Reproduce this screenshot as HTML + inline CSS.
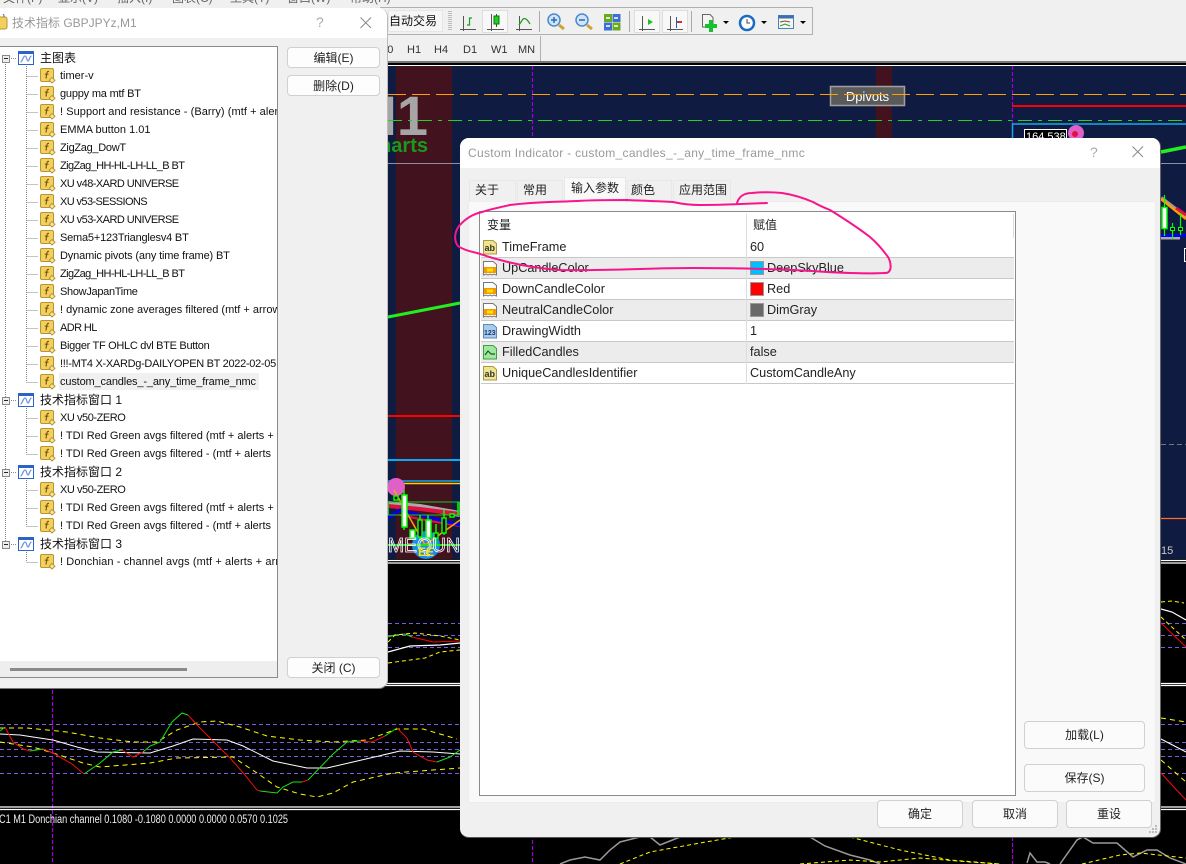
<!DOCTYPE html>
<html><head><meta charset="utf-8"><style>
*{box-sizing:border-box}
html,body{margin:0;padding:0;width:1186px;height:864px;overflow:hidden;background:#000;font-family:"Liberation Sans","Noto Sans CJK SC",sans-serif;font-size:12px;color:#111}
.a{position:absolute}
#bg{position:absolute;left:0;top:0}
.t{position:absolute;white-space:nowrap;line-height:16px}
.dlg{position:absolute;background:#f0f0f0;overflow:hidden}
.btn{position:absolute;background:#fdfdfd;border:1px solid #d0d0d0;border-radius:4px;text-align:center;font-size:12px;color:#222}
.r{position:absolute;left:60px;height:16px;line-height:16px;white-space:nowrap;font-size:11px;color:#111}
.r svg{position:absolute;left:-20px;top:0;width:16px;height:16px}
.h{position:absolute;left:40px;height:16px;line-height:16px;white-space:nowrap;font-size:12px;color:#111}
.h svg{position:absolute;left:-22px;top:0;width:16px;height:16px}
.h i{position:absolute;left:-38px;top:5px;width:8px;height:8px;border:1px solid #888;background:#eee}
.h i:after{content:"";position:absolute;left:1px;top:2px;width:4px;height:1px;background:#223}
.c{position:absolute;height:16px;line-height:16px;white-space:nowrap;font-size:12.700px;color:#222}
.c svg{position:absolute;left:-20px;top:0;width:16px;height:16px}
.tab{position:absolute;background:#f0f0f0;border:1px solid #e8e8e8;border-bottom:0;font-size:12px;text-align:left;line-height:19px;color:#222}
.tb{position:absolute;font-size:11px;color:#333;line-height:14px}
</style></head><body>
<svg width="0" height="0" style="position:absolute">
<defs>
<symbol id="f" viewBox="0 0 16 16"><rect x=".5" y=".5" width="13" height="13" rx="1.500" fill="#f3cf5e" stroke="#b8962e"/><path d="M9 3.500C7.500 3 7 4 6.800 5.500L6 10.500M4.800 6.200h3.700" stroke="#7a5a10" stroke-width="1.200" fill="none"/><path d="M12 9.500l3 2.700-3 2.800-2.700-2.800z" fill="#f8e6a0" stroke="#b8962e"/></symbol>
<symbol id="w" viewBox="0 0 16 16"><rect x=".5" y="1.500" width="15" height="13" fill="#fff" stroke="#2b63c8"/><rect x=".5" y="1.500" width="15" height="2.500" fill="#2b63c8"/><path d="M2.500 12C4.500 12 5 6 7 6S8.500 11 10 11 11.500 6 13.500 6" stroke="#6f94e0" stroke-width="1.300" fill="none"/></symbol>
<symbol id="col" viewBox="0 0 16 16"><path d="M1.500 15V1.500H11L14.500 4.500V15L12 14 10 15 8 14 6 15 4 14z" fill="#fff" stroke="#777"/><rect x="2" y="7" width="12" height="6" fill="#f59a00"/><rect x="5" y="8.500" width="6" height="3" fill="#ffe400"/></symbol>
</defs></svg>

<svg id="bg" width="1186" height="864" viewBox="0 0 1186 864">
<rect width="1186" height="864" fill="#000"/>
<rect y="66" width="1186" height="493" fill="#101b41"/>
<rect x="396" y="66" width="56" height="493" fill="#42121e"/>
<rect x="876" y="66" width="16" height="80" fill="#42121e"/>
<text x="428" y="135" text-anchor="end" font-family="Liberation Sans" font-weight="bold" font-size="56" fill="#a6a6a6">M1</text>
<text x="428" y="152" text-anchor="end" font-family="Liberation Sans" font-weight="bold" font-size="20" fill="#1a9a1a">Charts</text>
<rect x="830.500" y="86.500" width="74" height="19" fill="#5a5a5a" stroke="#a0a0a0" stroke-width="1.500"/>
<text x="867.500" y="101" text-anchor="middle" font-family="Liberation Sans" font-size="13" fill="#fff">Dpivots</text>
<path d="M388 94.500H1186" stroke="#ffa000" stroke-width="1" stroke-dasharray="18 6" fill="none"/>
<path d="M388 120.500H1186" stroke="#22d41c" stroke-width="1" stroke-dasharray="14 6 4 6" fill="none"/>
<path d="M532.500 66V138M1012.500 66V138M52.500 690V864M532.500 690V864M1012.500 837V864" stroke="#a000e0" stroke-width="1.200" stroke-dasharray="4 2" fill="none"/>
<path d="M1012 106H1186" stroke="#f00" stroke-width="2"/>
<path d="M1012.500 138V124H1186" stroke="#10a8f0" stroke-width="1.500" fill="none"/>
<circle cx="1076" cy="133" r="8" fill="#e060c8"/><circle cx="1075" cy="134" r="3" fill="#e01040"/>
<rect x="1024.500" y="129.500" width="42" height="11" fill="#000" stroke="#fff"/>
<text x="1026" y="140" font-family="Liberation Sans" font-size="11" fill="#fff">164.538</text>
<path d="M388 163.500H460M1161 163.500H1186" stroke="#8a8ea8" stroke-width="1"/>
<path d="M388 317L460 303" stroke="#20f020" stroke-width="3"/>
<path d="M1161 152L1186 147" stroke="#20f020" stroke-width="3.500"/>
<path d="M388 416H460" stroke="#f00" stroke-width="2"/>
<path d="M388 460H460" stroke="#10a8f0" stroke-width="2"/>
<path d="M388 481H460" stroke="#10a8f0" stroke-width="1.500"/><path d="M388 483.500H460" stroke="#ffd000" stroke-width="1.500"/>
<path d="M1161 444.500H1186" stroke="#777" stroke-dasharray="5 3"/>
<path d="M1161 518.500H1186" stroke="#ff6a30" stroke-width="1.200"/>
<text x="1161" y="554" font-family="Liberation Sans" font-size="11" fill="#ccc">15</text>
<path d="M1161 198L1186 217" stroke="#999" stroke-width="4"/><path d="M1161 199L1186 219" stroke="#ffa000" stroke-width="2.500"/><path d="M1176 208L1186 215" stroke="#e01040" stroke-width="3"/>
<path d="M1161 238H1180" stroke="#aaa" stroke-width="3"/><path d="M1161 235.500H1186" stroke="#0000f0" stroke-width="3"/>
<g stroke="#0f0" fill="#000"><path d="M1164.500 195V236M1172.500 223V239M1180.500 213V235" fill="none" stroke-width="1.200"/><rect x="1162" y="207.500" width="5" height="21" fill="#fff" stroke-width="1.500"/><rect x="1170.500" y="227.500" width="4" height="3"/><rect x="1178.500" y="227.500" width="4" height="3"/></g>
<rect x="1184.500" y="248.500" width="4" height="13" fill="none" stroke="#fff"/>
<!-- lower left chart cluster -->
<circle cx="396" cy="487" r="9" fill="#e060c8"/>
<circle cx="426" cy="545" r="14" fill="#1c8ce8"/>
<path d="M388 504L420 507L460 514" stroke="#aaa" stroke-width="6" fill="none"/>
<path d="M388 506L420 509L460 514" stroke="#e01040" stroke-width="4" fill="none"/>
<path d="M400 515L430 521L460 526" stroke="#e01040" stroke-width="2" fill="none"/>
<path d="M388 518L400 510L460 525" stroke="#0000f0" stroke-width="3" fill="none"/>
<path d="M394 490L425 545" stroke="#ffa000" stroke-width="1.500"/><path d="M425 545L460 520" stroke="#ffa000" stroke-width="1.500"/>
<rect x="388.500" y="502" width="71" height="13" fill="none" stroke="#20c020"/>
<g stroke="#0f0" stroke-width="1.500"><path d="M404 490V530M420 515V540M428 515V540M436 524V545M444 510V535M458 502V515" fill="none"/>
<rect x="402" y="495" width="5" height="32" fill="#fff"/><rect x="410" y="530" width="5" height="8" fill="#fff"/><rect x="418" y="520" width="4" height="17" fill="#000"/><rect x="426" y="520" width="5" height="18" fill="#fff"/><rect x="434" y="533" width="4" height="5" fill="#000"/><rect x="442" y="518" width="4" height="15" fill="#000"/><rect x="394" y="496" width="4" height="4" fill="#000"/><rect x="450" y="514" width="4" height="3" fill="#000"/></g>
<path d="M388 545H460" stroke="#20e020" stroke-width="2"/>
<text x="388" y="552" font-family="Liberation Sans" font-size="20" fill="none" stroke="#fff" stroke-width=".8" textLength="72" lengthAdjust="spacingAndGlyphs">MEQUN</text>
<text x="418" y="556" font-family="Liberation Sans" font-weight="bold" font-size="12" fill="#ffe000">EE</text>
<path d="M0 560.500H1186M0 563H1186M0 683.500H1186M0 685.500H1186M0 807H1186M0 809.500H1186" stroke="#fff" stroke-width="1.200"/>
<!-- band 1 -->
<path d="M388 623.500H460M1161 623.500H1186M388 635.500H460M1161 635.500H1186M388 647.500H460M1161 647.500H1186" stroke="#7a5ce0" stroke-dasharray="4 3"/>
<path d="M388 652L410 646L440 645L460 643M1161 609L1172 612L1186 620" stroke="#fff" stroke-width="1.200" fill="none"/>
<path d="M388 637L395 635L405 634L412 637" stroke="#20e020" fill="none"/><path d="M412 637L425 640L433 642L460 641M1161 623L1186 647" stroke="#f00" fill="none"/>
<path d="M388 642L395 635L415 633L440 636L460 640M388 663L425 658L440 652L460 650M1161 602L1172 601L1184 603M1161 617L1186 640" stroke="#ff0" stroke-dasharray="4 3" fill="none"/>
<!-- band 2 -->
<g fill="none">
<path d="M0 724.500H460M0 742.500H460M0 749.500H460M0 756.500H460M0 773.500H460M1161 724.500H1186M1161 742.500H1186M1161 749.500H1186M1161 756.500H1186M1161 773.500H1186" stroke="#7a5ce0" stroke-dasharray="4 3"/>
<path d="M0 734L20 735L33 737L53 740L77 747L97 752L150 753L173 746L193 739L227 740L243 746L273 761L307 768L327 768L353 762L400 751L433 752L460 754M1161 739L1186 752" stroke="#fff" stroke-width="1"/>
<path d="M0 728L27 728L67 732L100 738L133 742L157 742L177 730L200 722L217 721L240 727L267 736L300 740L333 742L367 740L397 729L423 729L457 739M1161 718L1186 722" stroke="#ff0" stroke-width="1" stroke-dasharray="5 4"/>
<path d="M0 742L33 747L53 753L83 763L100 767L150 763L177 758L233 757L257 773L277 787L300 794L317 797L333 793L353 782L393 773L460 768M1161 760L1186 782" stroke="#ff0" stroke-width="1" stroke-dasharray="5 4"/>
<path d="M0 731L5 727M30 751L43 749M84 774L100 763L113 752L122 750M143 752L150 746L160 742L172 722L182 713L188 715M260 791L277 793L283 787L293 782L302 782M308 780L333 754L347 742L360 741M385 736L397 728M437 762L450 757L460 750" stroke="#18e018" stroke-width="1"/>
<path d="M5 727L13 742L23 749L30 751M43 749L53 753L72 764L84 774M122 750L133 757L143 752M188 715L200 728L230 758L245 775L257 790L260 791M302 782L308 780M360 741L372 742L385 736M397 728L407 738L413 752L427 760L437 762M1161 773L1172 785L1186 800" stroke="#f01010" stroke-width="1"/>
<!-- bottom band -->
<path d="M560 864L570 860L585 857L600 860L610 850L620 842L640 837M650 837L660 845L680 837M810 837L825 846L850 855L870 860L880 864M1027 863L1030 853L1037 862L1045 862L1050 864M1060 864L1077 840L1083 837L1093 843L1117 843L1133 857L1147 850L1157 850L1170 858L1186 864" stroke="#999" stroke-width="1.500"/>
<path d="M620 864L650 852L700 843L735 837M850 837L900 850L950 860L1000 864M800 864L850 860L880 862L920 858L970 862L1000 864M1082 864L1120 855L1140 853L1186 858" stroke="#ff0" stroke-width="1" stroke-dasharray="4 3"/>
</g>
<text x="-1" y="823" font-family="Liberation Sans" font-size="11.500" fill="#eee" textLength="289" lengthAdjust="spacingAndGlyphs">C1 M1 Donchian channel 0.1080 -0.1080 0.0000 0.0000 0.0570 0.1025</text>
</svg>

<!-- top chrome -->
<div class="a" style="left:0;top:0;width:1186px;height:62px;background:#f0f0f0"></div>
<div class="a" style="left:0;top:61px;width:1186px;height:2px;background:#777"></div>
<div class="a" style="left:0;top:63px;width:1186px;height:2px;background:#000"></div>
<div class="a" style="left:0;top:65px;width:1186px;height:1px;background:#fff"></div>
<div class="a" style="left:0;top:-11px;width:400px;height:16px;font-size:12px;color:#666;white-space:nowrap">
<span class="a" style="left:3px">文件(F)</span><span class="a" style="left:58px">显示(V)</span><span class="a" style="left:117px">插入(I)</span><span class="a" style="left:172px">图表(C)</span><span class="a" style="left:230px">工具(T)</span><span class="a" style="left:287px">窗口(W)</span><span class="a" style="left:350px">帮助(H)</span></div>
<div class="a" style="left:380px;top:7px;width:433px;height:28px;border:1px solid #b0b0b0;border-left:0;background:#f0f0f0"></div>
<div class="a" style="left:540px;top:36px;width:1px;height:25px;background:#b0b0b0"></div>
<div class="a" style="left:388px;top:10px;width:55px;height:22px;background:#f6f6f6;border:1px solid #e6e6e6"></div>
<div class="t" style="left:389px;top:13px;font-size:12px;color:#111">自动交易</div>
<svg class="a" style="left:388px;top:0" width="430" height="36" viewBox="388 0 430 36">
<path d="M448 11.500h4M448 13.500h4M448 15.500h4M448 17.500h4M448 19.500h4M448 21.500h4M448 23.500h4M448 25.500h4M448 27.500h4M448 29.500h4" stroke="#bbb" stroke-width="1"/>
<rect x="482.500" y="10.500" width="25" height="22" fill="#f8f8f8" stroke="#ddd"/>
<rect x="634.500" y="10.500" width="25" height="22" fill="#f8f8f8" stroke="#ddd"/><rect x="662.500" y="10.500" width="25" height="22" fill="#f8f8f8" stroke="#ddd"/>
<path d="M539.500 11V32M629.500 11V32M691.500 11V32" stroke="#aaa"/>
<g fill="none" stroke="#555" stroke-width="1">
<path d="M463.500 16V31M460 29.500H476"/><path d="M491.500 14V31M487 29.500H504"/><path d="M519.500 16V31M516 29.500H532"/><path d="M642.500 16V31M639 29.500H655"/><path d="M670.500 16V31M667 29.500H683"/>
</g>
<path d="M467 25H469.500V18H472" stroke="#18a018" stroke-width="1.200" fill="none"/>
<path d="M496.500 14V27" stroke="#107010"/><rect x="494" y="16" width="5" height="8" fill="#20d020" stroke="#107010"/>
<path d="M519 25L523 19Q526 17 530 24" stroke="#20a020" stroke-width="1.300" fill="none"/>
<path d="M648 19L653 22L648 25Z" fill="#20c020"/>
<path d="M676.500 17V28" stroke="#2060b0"/><path d="M677 22H682" stroke="#d03030" stroke-width="2"/>
<circle cx="554" cy="20" r="6" fill="#cfe6fa" stroke="#4a8ac8" stroke-width="1.500"/><path d="M551 20H557M554 17V23" stroke="#2a6ab0" stroke-width="1.500"/><path d="M559 25L564 29" stroke="#d0a030" stroke-width="3"/>
<circle cx="582" cy="20" r="6" fill="#cfe6fa" stroke="#4a8ac8" stroke-width="1.500"/><path d="M579 20H585" stroke="#2a6ab0" stroke-width="1.500"/><path d="M587 25L592 29" stroke="#d0a030" stroke-width="3"/>
<rect x="604" y="14" width="8" height="8" fill="#6aaa20"/><rect x="612.500" y="14" width="8" height="8" fill="#3a70d0"/><rect x="604" y="22.500" width="8" height="8" fill="#3a70d0"/><rect x="612.500" y="22.500" width="8" height="8" fill="#6aaa20"/>
<path d="M606 18h4M614 18h4M606 26h4M614 26h4" stroke="#fff" stroke-width="1.500"/>
<path d="M702.500 27V14.500H710L713 17.500V27Z" fill="#f4f4f4" stroke="#666"/><path d="M705 26H717M711 20V32" stroke="#18c030" stroke-width="4"/>
<path d="M723 21h6l-3 3z" fill="#000"/>
<circle cx="747" cy="23" r="7" fill="#fff" stroke="#1a6cc0" stroke-width="2.500"/><path d="M747 19V23H750" stroke="#444" fill="none"/>
<path d="M761 21h6l-3 3z" fill="#000"/>
<rect x="778.500" y="15.500" width="15" height="13" fill="#f4f8f4" stroke="#4a80b8"/><rect x="778.500" y="15.500" width="15" height="3" fill="#3a70b0"/><path d="M780 22L785 21L790 22" stroke="#a04020" fill="none"/><path d="M780 26L785 24L790 26" stroke="#20a020" fill="none"/>
<path d="M800 21h6l-3 3z" fill="#000"/>
</svg>
<div class="tb" style="left:372px;top:43px">M30</div>
<div class="tb" style="left:407px;top:43px">H1</div>
<div class="tb" style="left:434px;top:43px">H4</div>
<div class="tb" style="left:463px;top:43px">D1</div>
<div class="tb" style="left:491px;top:43px">W1</div>
<div class="tb" style="left:518px;top:43px">MN</div>

<!-- left dialog -->
<div class="dlg" style="left:-10px;top:8px;width:398px;height:681px;border-radius:9px;border-right:1px solid #bbb;border-bottom:1px solid #777">
<div class="a" style="left:0;top:0;width:398px;height:30px;background:#fff"></div>
</div>
<div class="a" style="left:0;top:8px;width:388px;height:681px;overflow:hidden;pointer-events:none">
<svg class="a" style="left:-6px;top:6px" width="14" height="16" viewBox="0 0 14 16"><rect x="1" y="3" width="12" height="12" rx="2" fill="#f3cf5e" stroke="#b8962e"/><path d="M4 3V2a3 3 0 0 1 6 0v1" stroke="#3a70c0" fill="none"/></svg>
<div class="t" style="left:12px;top:7px;font-size:12px;color:#999">技术指标 GBPJPYz,M1</div>
<div class="t" style="left:316px;top:6px;font-size:14px;color:#aaa">?</div>
<svg class="a" style="left:360px;top:9px" width="12" height="12"><path d="M.5 .5L11 11M11 .5L.5 11" stroke="#888"/></svg>
</div>
<div class="a" style="left:0;top:46px;width:278px;height:632px;background:#fff;border:1px solid #8a8a93;border-left:0;overflow:hidden">
<svg class="a" style="left:0;top:0" width="277" height="530"><path d="M5.500 17V497M26.500 17V335M26.500 353V407M26.500 425V479M26.500 497V515M9 11.500H17M9 353.500H17M9 425.500H17M9 497.500H17M26.500 29.500H38M26.500 47.500H38M26.500 65.500H38M26.500 83.500H38M26.500 101.500H38M26.500 119.500H38M26.500 137.500H38M26.500 155.500H38M26.500 173.500H38M26.500 191.500H38M26.500 209.500H38M26.500 227.500H38M26.500 245.500H38M26.500 263.500H38M26.500 281.500H38M26.500 299.500H38M26.500 317.500H38M26.500 335.500H38M26.500 371.500H38M26.500 389.500H38M26.500 407.500H38M26.500 443.500H38M26.500 461.500H38M26.500 479.500H38M26.500 515.500H38" stroke="#888" stroke-dasharray="1 1" fill="none"/></svg>
<div class="a" style="left:59px;top:326px;width:200px;height:17px;background:#f0f0f0"></div>
<div class="h" style="top:3px"><i></i><svg><use href="#w"/></svg>主图表</div>
<div class="r" style="top:21px"><svg><use href="#f"/></svg>timer-v</div>
<div class="r" style="top:39px;letter-spacing:-.2px"><svg><use href="#f"/></svg>guppy ma mtf BT</div>
<div class="r" style="top:57px;letter-spacing:.06px"><svg><use href="#f"/></svg>! Support and resistance - (Barry) (mtf + alerts)</div>
<div class="r" style="top:75px"><svg><use href="#f"/></svg>EMMA button 1.01</div>
<div class="r" style="top:93px;letter-spacing:-.3px"><svg><use href="#f"/></svg>ZigZag_DowT</div>
<div class="r" style="top:111px;letter-spacing:-.6px"><svg><use href="#f"/></svg>ZigZag_HH-HL-LH-LL_B BT</div>
<div class="r" style="top:129px;letter-spacing:-.55px"><svg><use href="#f"/></svg>XU v48-XARD UNIVERSE</div>
<div class="r" style="top:147px;letter-spacing:-.6px"><svg><use href="#f"/></svg>XU v53-SESSIONS</div>
<div class="r" style="top:165px;letter-spacing:-.55px"><svg><use href="#f"/></svg>XU v53-XARD UNIVERSE</div>
<div class="r" style="top:183px;letter-spacing:-.2px"><svg><use href="#f"/></svg>Sema5+123Trianglesv4 BT</div>
<div class="r" style="top:201px;letter-spacing:-.15px"><svg><use href="#f"/></svg>Dynamic pivots (any time frame) BT</div>
<div class="r" style="top:219px;letter-spacing:-.6px"><svg><use href="#f"/></svg>ZigZag_HH-HL-LH-LL_B BT</div>
<div class="r" style="top:237px;letter-spacing:-.3px"><svg><use href="#f"/></svg>ShowJapanTime</div>
<div class="r" style="top:255px"><svg><use href="#f"/></svg>! dynamic zone averages filtered (mtf + arrows)</div>
<div class="r" style="top:273px;letter-spacing:-.6px"><svg><use href="#f"/></svg>ADR HL</div>
<div class="r" style="top:291px;letter-spacing:-.3px"><svg><use href="#f"/></svg>Bigger TF OHLC dvl BTE Button</div>
<div class="r" style="top:309px;letter-spacing:-.3px"><svg><use href="#f"/></svg>!!!-MT4 X-XARDg-DAILYOPEN BT 2022-02-05</div>
<div class="r" style="top:327px;letter-spacing:-.15px"><svg><use href="#f"/></svg>custom_candles_-_any_time_frame_nmc</div>
<div class="h" style="top:345px"><i></i><svg><use href="#w"/></svg>技术指标窗口 1</div>
<div class="r" style="top:363px;letter-spacing:-.45px"><svg><use href="#f"/></svg>XU v50-ZERO</div>
<div class="r" style="top:381px"><svg><use href="#f"/></svg>! TDI Red Green avgs filtered (mtf + alerts +</div>
<div class="r" style="top:399px"><svg><use href="#f"/></svg>! TDI Red Green avgs filtered - (mtf + alerts</div>
<div class="h" style="top:417px"><i></i><svg><use href="#w"/></svg>技术指标窗口 2</div>
<div class="r" style="top:435px;letter-spacing:-.45px"><svg><use href="#f"/></svg>XU v50-ZERO</div>
<div class="r" style="top:453px"><svg><use href="#f"/></svg>! TDI Red Green avgs filtered (mtf + alerts +</div>
<div class="r" style="top:471px"><svg><use href="#f"/></svg>! TDI Red Green avgs filtered - (mtf + alerts</div>
<div class="h" style="top:489px"><i></i><svg><use href="#w"/></svg>技术指标窗口 3</div>
<div class="r" style="top:507px;letter-spacing:.1px"><svg><use href="#f"/></svg>! Donchian - channel avgs (mtf + alerts + arrows)</div>
<div class="a" style="left:0;top:614px;width:277px;height:16px;background:#eeeeee"></div>
<div class="a" style="left:10px;top:621px;width:177px;height:3px;background:#8a8a8a"></div>
</div>
<div class="btn" style="left:287px;top:47px;width:93px;height:21px;line-height:20px">编辑(E)</div>
<div class="btn" style="left:287px;top:75px;width:93px;height:21px;line-height:20px">删除(D)</div>
<div class="btn" style="left:287px;top:657px;width:93px;height:21px;line-height:20px">关闭 (C)</div>

<!-- right dialog -->
<div class="dlg" style="left:460px;top:138px;width:701px;height:700px;border-radius:9px;border-right:1px solid #666;border-bottom:1px solid #555">
<div class="a" style="left:0;top:0;width:701px;height:30px;background:#fff"></div>
<div class="t" style="left:8px;top:7px;font-size:12px;color:#999;letter-spacing:.3px">Custom Indicator - custom_candles_-_any_time_frame_nmc</div>
<div class="t" style="left:630px;top:6px;font-size:14px;color:#aaa">?</div>
<svg class="a" style="left:672px;top:8px" width="12" height="12"><path d="M.5 .5L11 11M11 .5L.5 11" stroke="#888"/></svg>
<div class="a" style="left:8px;top:63px;width:688px;height:602px;background:#f9f9f9;border:1px solid #ececec"></div>
<div class="tab" style="left:9px;top:42px;width:47px;height:22px;padding-left:5px">关于</div>
<div class="tab" style="left:57px;top:42px;width:46px;height:22px;padding-left:5px">常用</div>
<div class="tab" style="left:104px;top:39px;width:62px;height:25px;background:#f9f9f9;line-height:21px;padding-left:6px">输入参数</div>
<div class="tab" style="left:167px;top:42px;width:45px;height:22px;padding-left:3px">颜色</div>
<div class="tab" style="left:213px;top:42px;width:58px;height:22px;padding-left:5px">应用范围</div>
<div class="a" style="left:19px;top:73px;width:537px;height:585px;background:#fff;border:1px solid #8a8a93">
<div class="a" style="left:1px;top:45px;width:533px;height:1px;background:#c8c8c8"></div>
<div class="a" style="left:1px;top:46px;width:533px;height:21px;background:#ececec;border-bottom:1px solid #c8c8c8"></div>
<div class="a" style="left:1px;top:67px;width:533px;height:21px;border-bottom:1px solid #c8c8c8"></div>
<div class="a" style="left:1px;top:88px;width:533px;height:21px;background:#ececec;border-bottom:1px solid #c8c8c8"></div>
<div class="a" style="left:1px;top:109px;width:533px;height:21px;border-bottom:1px solid #c8c8c8"></div>
<div class="a" style="left:1px;top:130px;width:533px;height:21px;background:#ececec;border-bottom:1px solid #c8c8c8"></div>
<div class="a" style="left:1px;top:151px;width:533px;height:21px;border-bottom:1px solid #c8c8c8"></div>
<div class="a" style="left:266px;top:2px;width:1px;height:170px;background:#ddd"></div>
<div class="a" style="left:533px;top:2px;width:1px;height:24px;background:#ddd"></div>
<div class="c" style="left:7px;top:5px;font-size:12px">变量</div><div class="c" style="left:273px;top:5px;font-size:12px">赋值</div>
<div class="c" style="left:22px;top:27px"><svg viewBox="0 0 16 16"><path d="M1.500 15V1.500H11L14.500 4.500V15Z" fill="#efe590" stroke="#a89a40"/><text x="2.500" y="12" font-family="Liberation Sans" font-size="9" font-weight="bold" fill="#333">ab</text></svg>TimeFrame</div>
<div class="c" style="left:270px;top:27px">60</div>
<div class="c" style="left:22px;top:48px"><svg><use href="#col"/></svg>UpCandleColor</div>
<div class="a" style="left:270px;top:49px;width:14px;height:14px;background:#00bfff;border:1px solid #999"></div><div class="c" style="left:287px;top:48px">DeepSkyBlue</div>
<div class="c" style="left:22px;top:69px"><svg><use href="#col"/></svg>DownCandleColor</div>
<div class="a" style="left:270px;top:70px;width:14px;height:14px;background:#f00;border:1px solid #999"></div><div class="c" style="left:287px;top:69px">Red</div>
<div class="c" style="left:22px;top:90px"><svg><use href="#col"/></svg>NeutralCandleColor</div>
<div class="a" style="left:270px;top:91px;width:14px;height:14px;background:#696969;border:1px solid #999"></div><div class="c" style="left:287px;top:90px">DimGray</div>
<div class="c" style="left:22px;top:111px"><svg viewBox="0 0 16 16"><path d="M1.500 15V1.500H11L14.500 4.500V15Z" fill="#a8cdec" stroke="#5a8ab8"/><text x="2" y="12" font-family="Liberation Sans" font-size="7" font-weight="bold" fill="#1a3a6a">123</text></svg>DrawingWidth</div>
<div class="c" style="left:270px;top:111px">1</div>
<div class="c" style="left:22px;top:132px"><svg viewBox="0 0 16 16"><path d="M1.500 15V1.500H11L14.500 4.500V15Z" fill="#a0e8a0" stroke="#40a040"/><path d="M3 11L6 7L9 10H13" stroke="#1a5a1a" stroke-width="1.200" fill="none"/></svg>FilledCandles</div>
<div class="c" style="left:270px;top:132px">false</div>
<div class="c" style="left:22px;top:153px"><svg viewBox="0 0 16 16"><path d="M1.500 15V1.500H11L14.500 4.500V15Z" fill="#efe590" stroke="#a89a40"/><text x="2.500" y="12" font-family="Liberation Sans" font-size="9" font-weight="bold" fill="#333">ab</text></svg>UniqueCandlesIdentifier</div>
<div class="c" style="left:270px;top:153px">CustomCandleAny</div>
</div>
<div class="btn" style="left:564px;top:583px;width:121px;height:28px;line-height:26px;background:#fbfbfb">加载(L)</div>
<div class="btn" style="left:564px;top:626px;width:121px;height:28px;line-height:26px;background:#fbfbfb">保存(S)</div>
<div class="btn" style="left:417px;top:662px;width:86px;height:28px;line-height:26px;background:#fbfbfb">确定</div>
<div class="btn" style="left:512px;top:662px;width:86px;height:28px;line-height:26px;background:#fbfbfb">取消</div>
<div class="btn" style="left:606px;top:662px;width:86px;height:28px;line-height:26px;background:#fbfbfb">重设</div>
<svg class="a" style="left:688px;top:686px" width="10" height="10"><path d="M7 1h2v2H7zM4 4h2v2H4zM7 4h2v2H7zM1 7h2v2H1zM4 7h2v2H4zM7 7h2v2H7z" fill="#bbb"/></svg>
</div>

<!-- pink annotation -->
<svg class="a" style="left:0;top:0;pointer-events:none" width="1186" height="864" viewBox="0 0 1186 864"><path d="M737 203C739 196 745 193 752 193C762 192 772 192 782 193C795 195 806 199 813 202C820 206 825 208 830 210C843 218 857 227 870 237C877 243 883 250 888 257C891 262 891 268 890 270C889 272 888 273 885 273C865 274 846 273 827 272C783 269 738 268 693 268C648 268 604 271 560 270C530 268 503 262 477 253C468 251 462 249 458 246C454 241 454 233 459 226C465 219 473 214 482 212C491 209 501 207 510 205C532 202 555 202 577 201C594 200 610 200 627 200C643 201 658 201 673 202C682 204 691 205 700 205C722 205 745 204 767 203" fill="none" stroke="#f8148c" stroke-width="2" stroke-linecap="round" stroke-linejoin="round"/></svg>
</body></html>
